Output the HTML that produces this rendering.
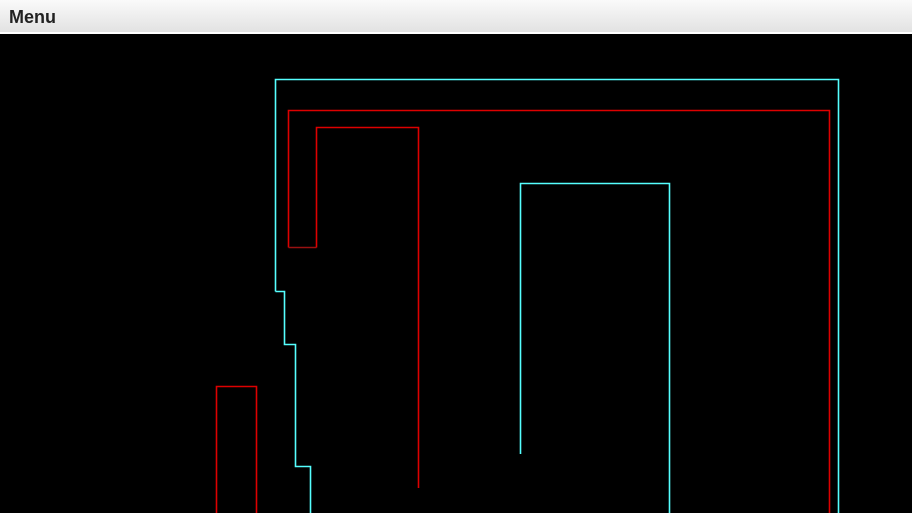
<!DOCTYPE html>
<html><head><style>
html,body{margin:0;padding:0;width:912px;height:513px;overflow:hidden;background:#000}
.hdr{position:absolute;left:0;top:0;width:912px;height:32px;background:linear-gradient(#fafafa,#e2e2e2);border-bottom:2px solid #fff;}
.hdr span{position:absolute;left:9px;top:7px;font:bold 18px "Liberation Sans",sans-serif;color:#222}
svg{position:absolute;left:0;top:0}
</style></head><body>
<div class="hdr"><span>Menu</span></div>
<svg width="912" height="513" viewBox="0 0 912 513" fill="none" stroke-width="1.6">
<path d="M275.5 291.5V79.5H838.5V513M275.5 291.5H284.5V344.5H295.5V466.5H310.5V513" stroke="#5ff"/>
<path d="M520.5 454V183.5H669.5V513" stroke="#5ff"/>
<path d="M288.5 247.5V110.5H829.5V513" stroke="#d00"/>
<path d="M288.5 247.5H316.5" stroke="#911"/>
<path d="M316.5 247.5V127.5H418.5V488" stroke="#d00"/>
<path d="M216.5 513V386.5H256.5V513" stroke="#d00"/>
</svg>
</body></html>
